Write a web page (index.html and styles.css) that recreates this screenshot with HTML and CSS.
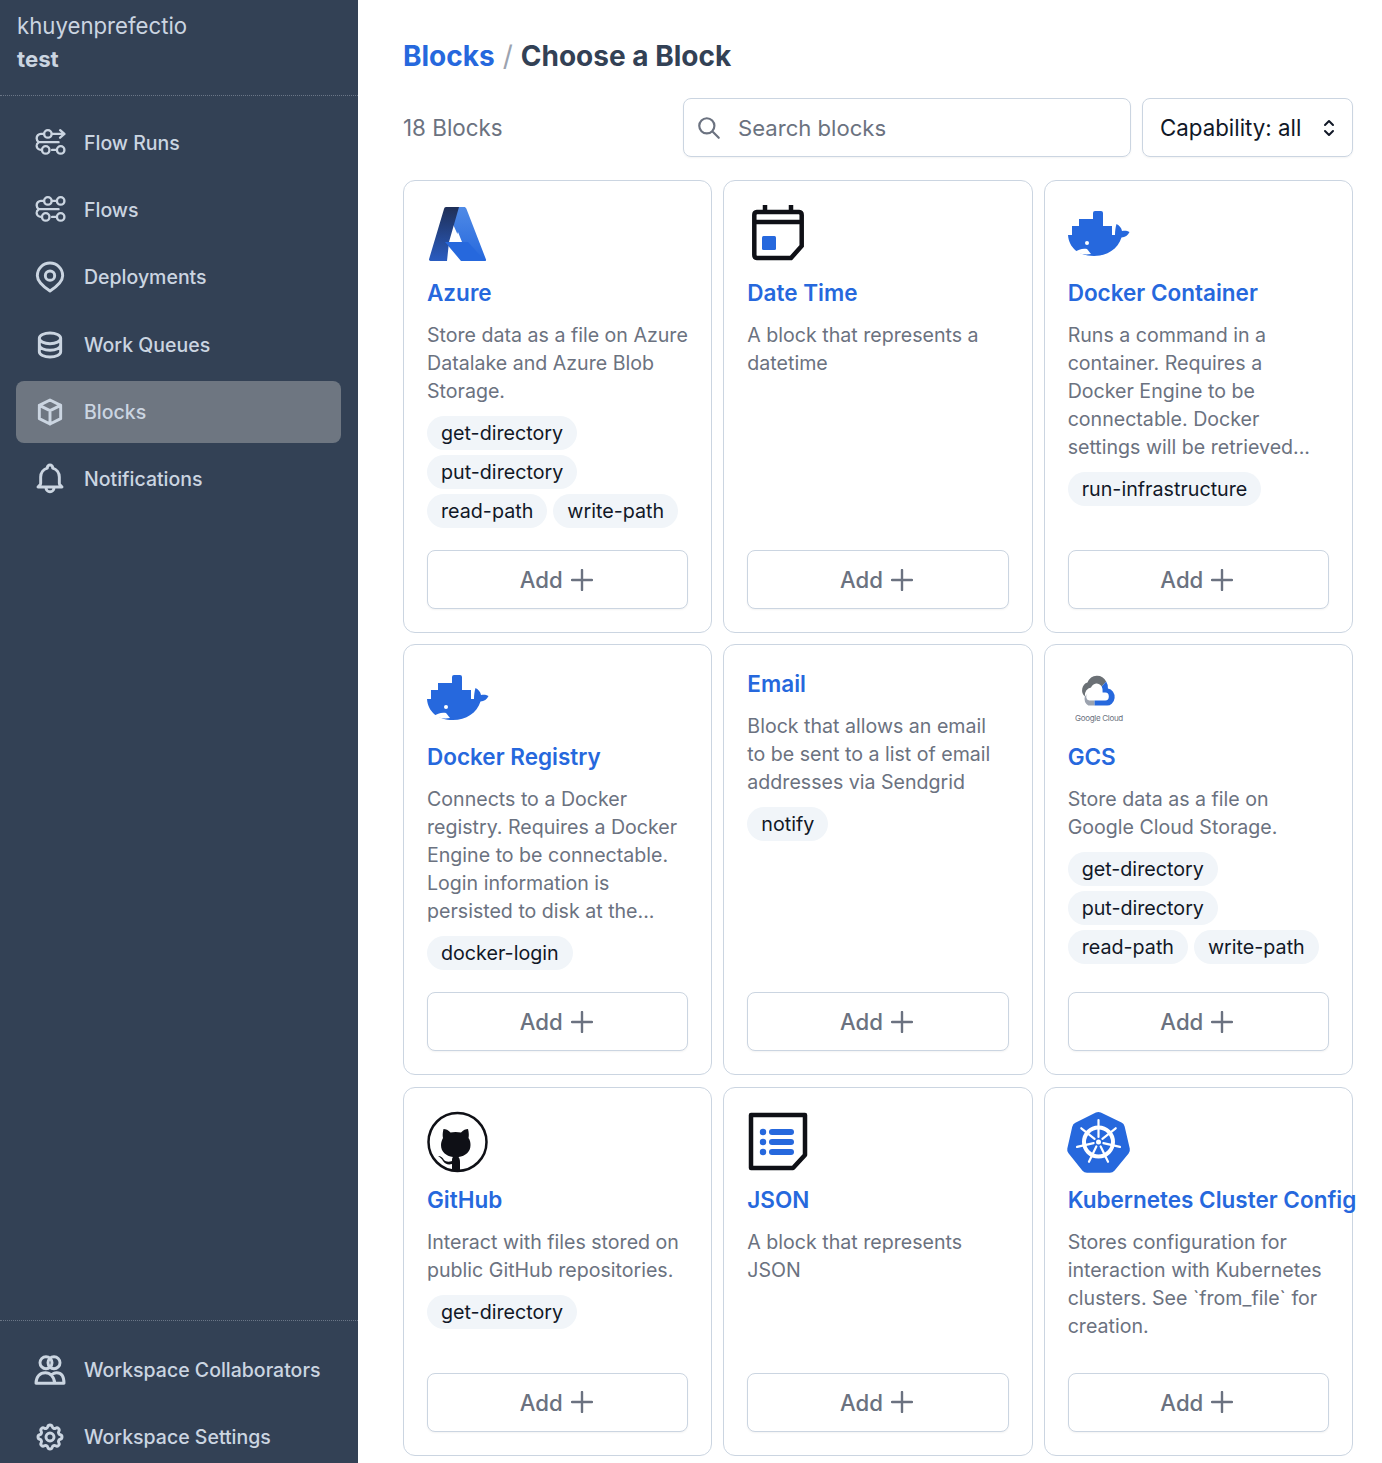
FILE: index.html
```html
<!DOCTYPE html>
<html>
    <head>
        <meta charset="utf-8">
        <title>Choose a Block</title>
        <link rel="stylesheet" href="styles.css">
    </head>
    <body>
        <svg class="defs" width="0" height="0">
            <symbol id="whale" viewBox="0 0 62 56">
                <path d="M27 6h6a2 2 0 0 1 2 2v13h9v9h3c0-4 .5-8 1.500-11 3 1.500 5 4 5.500 7 2.500-.5 5-.5 7.500 1-1.500 3.500-4.500 5-8 5.500C50 44 39 51 26 51 11 51 1 43 0 30h4v-9h7v-7h14V8a2 2 0 0 1 2-2z" fill="#2668dd"/>
                <circle cx="19" cy="38" r="2" fill="#fff"/>
                <path d="M7 47c3-2.500 8-4 12-3l4 5c-6 1-11 0-16-2z" fill="#fff"/>
            </symbol>
            <symbol id="plus" viewBox="0 0 22 22">
                <path d="M11 1v20M1 11h20" fill="none" stroke="currentColor" stroke-width="2.400" stroke-linecap="round"/>
            </symbol>
        </svg>

        <div class="app">
            <!-- sidebar -->
            <nav class="sidebar">
                <div>
                    <div class="account">
                        <div class="account-name">khuyenprefectio</div>
                        <div class="account-space">test</div>
                    </div>
                    <div class="nav-list">
                        <a class="nav-item">
                            <svg class="nav-icon" viewBox="0 0 30 26"><path d="M9 4.500H6.500a4 4 0 0 0-4 4c0 1.500.8 3 2 3.700a4 4 0 0 0-2 3.500 4 4 0 0 0 4 3.800H7M17 4.500h11M24.500 1l4 3.500-4 3.500M4.500 12.200H23M17 19.500h4"/><circle cx="13" cy="4.500" r="3.500"/><circle cx="11" cy="19.500" r="3.500"/><circle cx="25" cy="19.500" r="3.500"/></svg>
                            Flow Runs
                        </a>
                        <a class="nav-item">
                            <svg class="nav-icon" viewBox="0 0 30 26"><path d="M9 4.500H6.500a4 4 0 0 0-4 4c0 1.500.8 3 2 3.700a4 4 0 0 0-2 3.500 4 4 0 0 0 4 3.800H7M17 4.500h4M4.500 12.200H23M17 19.500h4"/><circle cx="13" cy="4.500" r="3.500"/><circle cx="25" cy="4.500" r="3.500"/><circle cx="11" cy="19.500" r="3.500"/><circle cx="25" cy="19.500" r="3.500"/></svg>
                            Flows
                        </a>
                        <a class="nav-item">
                            <svg class="nav-icon" viewBox="0 0 24 24"><path d="M12 1.500a9.500 9.500 0 0 1 9.500 9.500c0 4-3.500 7.500-9.500 11.500C6 18.500 2.500 15 2.500 11A9.500 9.500 0 0 1 12 1.500z"/><circle cx="12" cy="11" r="3.500"/></svg>
                            Deployments
                        </a>
                        <a class="nav-item">
                            <svg class="nav-icon" viewBox="0 0 24 24"><path d="M4 7v10c0 2.210 3.582 4 8 4s8-1.790 8-4V7M4 7c0 2.210 3.582 4 8 4s8-1.790 8-4M4 7c0-2.210 3.582-4 8-4s8 1.790 8 4m0 5c0 2.210-3.582 4-8 4s-8-1.790-8-4"/></svg>
                            Work Queues
                        </a>
                        <a class="nav-item active">
                            <svg class="nav-icon" viewBox="0 0 24 24"><path d="M20 7l-8-4-8 4m16 0l-8 4m8-4v10l-8 4m0-10L4 7m8 4v10M4 7v10l8 4"/></svg>
                            Blocks
                        </a>
                        <a class="nav-item">
                            <svg class="nav-icon" viewBox="0 0 24 24"><path d="M15 18h6l-1.400-1.400a2 2 0 0 1-.6-1.440V10.500a7 7 0 0 0-5-6.700V3.500a2 2 0 1 0-4 0v.3a7 7 0 0 0-5 6.700v4.660c0 .54-.21 1.060-.6 1.440L3 18h6m6 0v.5a3 3 0 1 1-6 0V18m6 0H9"/></svg>
                            Notifications
                        </a>
                    </div>
                </div>
                <div class="nav-bottom">
                    <a class="nav-item">
                        <svg class="nav-icon" viewBox="0 0 24 24"><circle cx="9" cy="6.500" r="4.500"/><circle cx="15" cy="6.500" r="4.500"/><path d="M1.500 22c0-5 3-8 7-8 2 0 3.500.8 4.500 2 1-1.200 2-2 4-2 3.500 0 5.500 3 5.500 8zM13 16c1.500 1.500 2.500 3.500 2.500 6"/></svg>
                        Workspace Collaborators
                    </a>
                    <a class="nav-item">
                        <svg class="nav-icon" viewBox="0 0 24 24"><path d="M10.325 4.317c.426-1.756 2.924-1.756 3.350 0a1.724 1.724 0 0 0 2.573 1.066c1.543-.94 3.310.826 2.370 2.370a1.724 1.724 0 0 0 1.065 2.572c1.756.426 1.756 2.924 0 3.350a1.724 1.724 0 0 0-1.066 2.573c.94 1.543-.826 3.310-2.370 2.370a1.724 1.724 0 0 0-2.572 1.065c-.426 1.756-2.924 1.756-3.350 0a1.724 1.724 0 0 0-2.573-1.066c-1.543.94-3.310-.826-2.370-2.370a1.724 1.724 0 0 0-1.065-2.572c-1.756-.426-1.756-2.924 0-3.350a1.724 1.724 0 0 0 1.066-2.573c-.94-1.543.826-3.310 2.370-2.370.996.608 2.296.07 2.572-1.065z"/><circle cx="12" cy="12" r="3"/></svg>
                        Workspace Settings
                    </a>
                </div>
            </nav>

            <!-- main content -->
            <main class="main">
                <h1 class="crumbs"><a class="crumb-link">Blocks</a><span class="crumb-sep">/</span>Choose a Block</h1>

                <div class="toolbar">
                    <div class="count">18 Blocks</div>
                    <div class="search">
                        <svg class="search-icon" viewBox="0 0 24 24"><path d="M21 21l-6-6m2-5a7 7 0 1 1-14 0 7 7 0 0 1 14 0z"/></svg>
                        <span>Search blocks</span>
                    </div>
                    <div class="select">
                        <span>Capability: all</span>
                        <svg class="select-icon" viewBox="0 0 24 24"><path d="M8 9l4-4 4 4m0 6l-4 4-4-4"/></svg>
                    </div>
                </div>

                <div class="grid">
                    <div class="card">
                        <svg class="logo" viewBox="0 0 62 56">
                            <defs>
                                <linearGradient id="az" x1="0" y1="0" x2="0" y2="1"><stop offset="0" stop-color="#1f2f57"/><stop offset="1" stop-color="#2a5cc0"/></linearGradient>
                                <linearGradient id="azr" x1="0" y1="0" x2="0" y2="1"><stop offset="0" stop-color="#4f8ae6"/><stop offset="1" stop-color="#2668dd"/></linearGradient>
                            </defs>
                            <path d="M23 2h14c1 0 2 .7 2.400 1.700L59 54.500c.4 1-.3 1.500-1 1.500H34L18 37h16l-9-20z" fill="url(#azr)"/>
                            <path d="M19 2h13L22 37l-2 19H3.500c-1 0-1.800-1-1.400-2L17 4c.3-1.200 1-2 2-2z" fill="url(#az)"/>
                            <path d="M18 37h17l6 0 17 19H36z" fill="#2668dd"/>
                            <path d="M31 27l4 10h-8z" fill="#fff"/>
                        </svg>
                        <div class="card-title">Azure</div>
                        <div class="card-desc">Store data as a file on Azure Datalake and Azure Blob Storage.</div>
                        <div class="tags"><span class="tag">get-directory</span><span class="tag">put-directory</span><span class="tag">read-path</span><span class="tag">write-path</span></div>
                        <button class="add-btn">Add <svg class="add-icon"><use href="#plus"/></svg></button>
                    </div>

                    <div class="card">
                        <svg class="logo" viewBox="0 0 62 56">
                            <path d="M18 0v8M44 0v8" stroke="#0f1016" stroke-width="4.500" fill="none"/>
                            <path d="M10 7h42a3 3 0 0 1 2.700 3v31L44 53H10a3 3 0 0 1-2.700-3V10A3 3 0 0 1 10 7zM7.300 17h47.400" stroke="#0f1016" stroke-width="4.500" fill="none"/>
                            <rect x="15" y="31" width="14" height="14" rx="1.500" fill="#2668dd"/>
                        </svg>
                        <div class="card-title">Date Time</div>
                        <div class="card-desc">A block that represents a datetime</div>
                        <div class="tags"></div>
                        <button class="add-btn">Add <svg class="add-icon"><use href="#plus"/></svg></button>
                    </div>

                    <div class="card">
                        <svg class="logo"><use href="#whale"/></svg>
                        <div class="card-title">Docker Container</div>
                        <div class="card-desc">Runs a command in a container. Requires a Docker Engine to be connectable. Docker settings will be retrieved...</div>
                        <div class="tags"><span class="tag">run-infrastructure</span></div>
                        <button class="add-btn">Add <svg class="add-icon"><use href="#plus"/></svg></button>
                    </div>

                    <div class="card">
                        <svg class="logo"><use href="#whale"/></svg>
                        <div class="card-title">Docker Registry</div>
                        <div class="card-desc">Connects to a Docker registry. Requires a Docker Engine to be connectable. Login information is persisted to disk at the...</div>
                        <div class="tags"><span class="tag">docker-login</span></div>
                        <button class="add-btn">Add <svg class="add-icon"><use href="#plus"/></svg></button>
                    </div>

                    <div class="card">
                        <div class="card-title">Email</div>
                        <div class="card-desc">Block that allows an email to be sent to a list of email addresses via Sendgrid</div>
                        <div class="tags"><span class="tag">notify</span></div>
                        <button class="add-btn">Add <svg class="add-icon"><use href="#plus"/></svg></button>
                    </div>

                    <div class="card">
                        <svg class="logo" viewBox="0 0 62 56">
                            <g transform="translate(-1 1.500) scale(.89 1)">
                                <path d="M20 26a8 8 0 0 1 3-14 12 12 0 0 1 21-1l-5 5a7 7 0 0 0-12 1 8 8 0 0 0-7 9z" fill="#6b7075"/>
                                <path d="M20 26a8 8 0 0 0 4 9h7v-5h-6a4 4 0 0 1-2-7z" fill="#9ca3af"/>
                                <path d="M44 11a11 11 0 0 1 2 7 8.500 8.500 0 0 1-2 17H31v-5h12a4 4 0 0 0 0-8h-3a9 9 0 0 0-1-6z" fill="#2668dd"/>
                            </g>
                            <text class="gcloud-text" x="31" y="52" text-anchor="middle">Google Cloud</text>
                        </svg>
                        <div class="card-title">GCS</div>
                        <div class="card-desc">Store data as a file on Google Cloud Storage.</div>
                        <div class="tags"><span class="tag">get-directory</span><span class="tag">put-directory</span><span class="tag">read-path</span><span class="tag">write-path</span></div>
                        <button class="add-btn">Add <svg class="add-icon"><use href="#plus"/></svg></button>
                    </div>

                    <div class="card">
                        <svg class="logo" viewBox="0 0 62 56">
                            <circle cx="30.500" cy="30" r="29" fill="none" stroke="#0f1016" stroke-width="2.500"/>
                            <path d="M25 59V52c-4 1-7 0-9-3-1-2-3-4-5-5 3 0 5 2 6 4 2 2 5 2 8 1 0-2 0-3 1-4-7-1-12-5-12-12 0-3 1-5 2-7-.5-2-.5-5 .5-9 2 0 5 1 7 3.500 3-.8 7-.8 10.500 0 2-2.500 5-3.500 7-3.500 1 4 1 7 .5 9 1.500 2 2 4 2 7 0 7-5 11-12 12 1 1 1.500 3 1.500 5v8.500a29 29 0 0 1-11 0z" fill="#0f1016"/>
                        </svg>
                        <div class="card-title">GitHub</div>
                        <div class="card-desc">Interact with files stored on public GitHub repositories.</div>
                        <div class="tags"><span class="tag">get-directory</span></div>
                        <button class="add-btn">Add <svg class="add-icon"><use href="#plus"/></svg></button>
                    </div>

                    <div class="card">
                        <svg class="logo" viewBox="0 0 62 56">
                            <path d="M4 3h54v40L46 56H4z" fill="none" stroke="#0f1016" stroke-width="4.500" stroke-linejoin="round"/>
                            <g fill="#2668dd">
                                <circle cx="16" cy="20" r="3.200"/><circle cx="16" cy="30" r="3.200"/><circle cx="16" cy="40" r="3.200"/>
                                <rect x="22" y="17" width="25" height="6" rx="3"/><rect x="22" y="27" width="25" height="6" rx="3"/><rect x="22" y="37" width="25" height="6" rx="3"/>
                            </g>
                        </svg>
                        <div class="card-title">JSON</div>
                        <div class="card-desc">A block that represents JSON</div>
                        <div class="tags"></div>
                        <button class="add-btn">Add <svg class="add-icon"><use href="#plus"/></svg></button>
                    </div>

                    <div class="card">
                        <svg class="logo" viewBox="0 0 62 56">
                            <path d="M28 .6a6 6 0 0 1 5 0l21 10a6 6 0 0 1 3.200 4l5.200 22.500a6 6 0 0 1-1.200 5L46.800 59.600a6 6 0 0 1-4.600 2.200H19a6 6 0 0 1-4.600-2.200L.2 42a6 6 0 0 1-1.200-5L4 15a6 6 0 0 1 3.200-4z" fill="#2668dd" transform="translate(0.300 0) scale(0.985)"/>
                            <g fill="none" stroke="#fff" stroke-linecap="round">
                                <circle cx="30.500" cy="30" r="14.500" stroke-width="4"/>
                                <g stroke-width="2.200">
                                    <path d="M30.500 8V25"/>
                                    <path d="M30.500 8V25" transform="rotate(51.400 30.500 30)"/>
                                    <path d="M30.500 8V25" transform="rotate(102.900 30.500 30)"/>
                                    <path d="M30.500 8V25" transform="rotate(154.300 30.500 30)"/>
                                    <path d="M30.500 8V25" transform="rotate(205.700 30.500 30)"/>
                                    <path d="M30.500 8V25" transform="rotate(257.100 30.500 30)"/>
                                    <path d="M30.500 8V25" transform="rotate(308.600 30.500 30)"/>
                                </g>
                            </g>
                            <circle cx="30.500" cy="30" r="2.500" fill="#fff"/>
                        </svg>
                        <div class="card-title">Kubernetes Cluster Config</div>
                        <div class="card-desc">Stores configuration for interaction with Kubernetes clusters. See `from_file` for creation.</div>
                        <div class="tags"></div>
                        <button class="add-btn">Add <svg class="add-icon"><use href="#plus"/></svg></button>
                    </div>
                </div>
            </main>
        </div>
    </body>
</html>
```

FILE: styles.css
```css
html, body {
    margin: 0;
    height: 1463px;
    overflow: hidden;
}

body {
    font-family: Inter, "Liberation Sans", sans-serif;
    background-color: #fff;
}

.defs {
    position: absolute;
}

.app {
    display: flex;
    height: 1463px;
}

    /*sidebar*/

.sidebar {
    width: 358px;
    flex-shrink: 0;
    background-color: #334155;
    color: #cbd5e1;
    display: flex;
    flex-direction: column;
    justify-content: space-between;
}

.account {
    height: 96px;
    box-sizing: border-box;
    padding: 9px 16px 0 17px;
    border-bottom: 1px dotted #6b7687;
    font-size: 22.2px;
    line-height: 33px;
}

.account-space {
    font-weight: 700;
}

.nav-list {
    padding: 16px 17px 0 16px;
    display: flex;
    flex-direction: column;
    gap: 5.2px;
}

.nav-bottom {
    height: 143px;
    box-sizing: border-box;
    padding: 18px 17px 0 16px;
    border-top: 1px dotted #6b7687;
    display: flex;
    flex-direction: column;
    gap: 5.2px;
}

.nav-item {
    height: 62px;
    flex-shrink: 0;
    box-sizing: border-box;
    padding-left: 18px;
    border-radius: 8px;
    display: flex;
    align-items: center;
    gap: 18px;
    font-size: 19.5px;
    font-weight: 500;
}

.nav-item.active {
    background-color: #6e7681;
}

.nav-icon {
    width: 32px;
    height: 32px;
    flex-shrink: 0;
    fill: none;
    stroke: #cbd5e1;
    stroke-width: 2.2;
    stroke-linecap: round;
    stroke-linejoin: round;
}

    /*main area*/

.main {
    flex: 1;
    padding: 0 29px 0 45px;
    min-width: 0;
}

.crumbs {
    margin: 0;
    padding-top: 36px;
    height: 62px;
    line-height: 40px;
    font-size: 28px;
    font-weight: 700;
    color: #334155;
}

.crumb-link {
    color: #2668dd;
}

.crumb-sep {
    color: #9ca3af;
    font-weight: 400;
    margin: 0 8px;
}

.toolbar {
    display: flex;
    align-items: stretch;
    height: 59px;
    margin-bottom: 23px;
}

.count {
    width: 280px;
    display: flex;
    align-items: center;
    font-size: 22.4px;
    color: #6b7280;
}

.search {
    width: 448px;
    box-sizing: border-box;
    border: 1px solid #cbd5e1;
    border-radius: 8px;
    box-shadow: 0 1px 2px rgba(0, 0, 0, 0.05);
    display: flex;
    align-items: center;
    padding-left: 12px;
    gap: 16px;
    font-size: 22.1px;
    color: #6b7280;
}

.search-icon {
    width: 26px;
    height: 26px;
    fill: none;
    stroke: #6b7280;
    stroke-width: 2;
    stroke-linecap: round;
    stroke-linejoin: round;
}

.select {
    width: 211px;
    margin-left: 11px;
    box-sizing: border-box;
    border: 1px solid #cbd5e1;
    border-radius: 8px;
    box-shadow: 0 1px 2px rgba(0, 0, 0, 0.05);
    display: flex;
    align-items: center;
    justify-content: space-between;
    padding: 0 11px 0 17px;
    font-size: 22.3px;
    color: #111827;
}

.select-icon {
    width: 24px;
    height: 24px;
    fill: none;
    stroke: #111827;
    stroke-width: 2;
    stroke-linecap: round;
    stroke-linejoin: round;
}

    /*cards*/

.grid {
    display: grid;
    grid-template-columns: repeat(3, 1fr);
    gap: 11.4px 11px;
}

.card {
    border: 1px solid #cbd5e1;
    border-radius: 12px;
    padding: 25px 23px 23px;
    display: flex;
    flex-direction: column;
    min-width: 0;
}

.logo {
    display: block;
    width: 62px;
    height: 56px;
    overflow: visible;
    margin: -1px 0 18px;
}

.gcloud-text {
    font-size: 8px;
    fill: #6b7280;
    letter-spacing: -0.3px;
}

.card-title {
    font-size: 22.5px;
    line-height: 28px;
    font-weight: 600;
    color: #2668dd;
    white-space: nowrap;
}

.card-desc {
    margin-top: 14px;
    font-size: 19.6px;
    line-height: 28px;
    color: #6b7280;
}

.tags {
    margin: 11px 0 22px;
    display: flex;
    flex-wrap: wrap;
    gap: 5px 6px;
    flex-grow: 1;
    align-content: flex-start;
}

.tag {
    height: 34px;
    line-height: 34px;
    padding: 0 14px;
    border-radius: 17px;
    background-color: #f1f5f9;
    color: #111827;
    font-size: 19.7px;
}

.add-btn {
    height: 59px;
    flex-shrink: 0;
    border: 1px solid #cbd5e1;
    border-radius: 8px;
    background-color: #fff;
    box-shadow: 0 1px 2px rgba(0, 0, 0, 0.05);
    font-family: inherit;
    font-size: 22.2px;
    font-weight: 500;
    color: #6b7280;
    display: flex;
    align-items: center;
    justify-content: center;
    gap: 8px;
    padding: 0 3px 0 0;
}

.add-icon {
    width: 22px;
    height: 22px;
}
```
